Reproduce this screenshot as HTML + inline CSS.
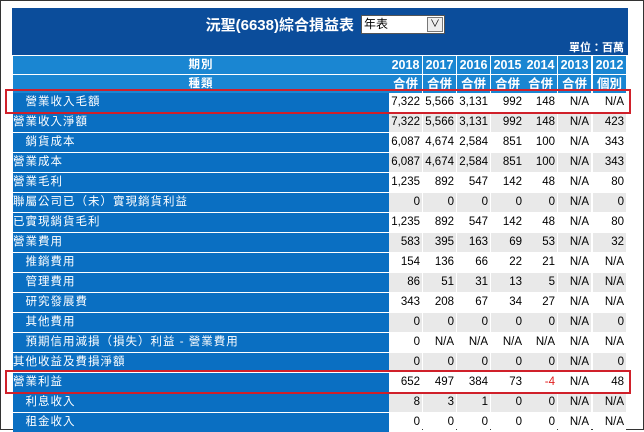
<!DOCTYPE html><html><head><meta charset="utf-8"><style>
*{margin:0;padding:0;box-sizing:border-box}
body{width:644px;height:430px;background:#fff;position:relative;overflow:hidden;font-family:"Liberation Sans","Noto Sans CJK TC",sans-serif;}
.frame{position:absolute;left:0;top:0;width:644px;height:430px;border:1px solid #333;}
.top{position:absolute;left:12px;top:8px;width:616px;height:47px;background:#0b4d9b;color:#fff}
.title{position:absolute;left:170px;width:172px;top:6px;text-align:right;font-size:15px;font-weight:bold;white-space:nowrap}
.sel{position:absolute;left:349px;top:7px;width:84px;height:19px;background:#fff;border:1px solid #555;color:#000;font-size:12px;padding-left:2px;line-height:17px}
.sel i{position:absolute;right:1px;top:1px;width:16px;height:15px;border:1px solid #777;background:#eee;font-style:normal;text-align:center;font-size:10px;line-height:14px}
.unit{position:absolute;right:4px;top:31px;font-size:11px;font-weight:bold}
.row{position:absolute;left:12px;width:616px;height:19px;font-size:11.5px;line-height:19px}
.lab{position:absolute;left:1px;top:0;width:376px;height:19px;background:#0a6fc2;color:#fff;letter-spacing:1px}
.c{position:absolute;top:0;width:33px;height:19px;text-align:right;padding-right:2px;color:#000}
.h .lab{background:#1a86d2;text-align:center;font-weight:bold}
.h .c{background:#1a86d2;color:#fff;font-weight:bold;text-align:center;padding:0;font-size:12.5px}
.red{color:#e02020}
.box{position:absolute;left:5px;width:626px;border:2px solid #d0202a}
</style></head><body>
<div class="frame"></div>
<div class="top"><div class="title">沅聖(6638)綜合損益表</div><div class="sel">年表<i>∨</i></div><div class="unit">單位：百萬</div></div>
<div id="t"></div>
<div class="box" style="top:89px;height:25px"></div>
<div class="box" style="top:370px;height:24px"></div>
<script>
var xs=[377,411,445,479,512,546,581];
var rows=[
["期別",["2018","2017","2016","2015","2014","2013","2012"],1],
["種類",["合併","合併","合併","合併","合併","合併","個別"],1],
["　營業收入毛額",["7,322","5,566","3,131","992","148","N/A","N/A"]],
["營業收入淨額",["7,322","5,566","3,131","992","148","N/A","423"]],
["　銷貨成本",["6,087","4,674","2,584","851","100","N/A","343"]],
["營業成本",["6,087","4,674","2,584","851","100","N/A","343"]],
["營業毛利",["1,235","892","547","142","48","N/A","80"]],
["聯屬公司已（未）實現銷貨利益",["0","0","0","0","0","N/A","0"]],
["已實現銷貨毛利",["1,235","892","547","142","48","N/A","80"]],
["營業費用",["583","395","163","69","53","N/A","32"]],
["　推銷費用",["154","136","66","22","21","N/A","N/A"]],
["　管理費用",["86","51","31","13","5","N/A","N/A"]],
["　研究發展費",["343","208","67","34","27","N/A","N/A"]],
["　其他費用",["0","0","0","0","0","N/A","0"]],
["　預期信用減損（損失）利益 - 營業費用",["0","N/A","N/A","N/A","N/A","N/A","N/A"]],
["其他收益及費損淨額",["0","0","0","0","0","N/A","0"]],
["營業利益",["652","497","384","73","-4","N/A","48"]],
["　利息收入",["8","3","1","0","0","N/A","N/A"]],
["　租金收入",["0","0","0","0","0","N/A","N/A"]]];
var h="";
rows.forEach(function(r,i){
 var top=i<2?56+i*19:93+(i-2)*20;
 var bg=i<2?"":(i%2==0?"#fff":"#e9e9e9");
 h+='<div class="row'+(r[2]?' h':'')+'" style="top:'+top+'px;'+(i<2?'height:18px;line-height:18px':'')+'"><div class="lab"'+(i<2?' style="height:18px"':'')+'>'+r[0]+'</div>';
 r[1].forEach(function(v,j){h+='<div class="c'+(v=="-4"?' red':'')+'" style="left:'+xs[j]+'px;'+(i<2?'height:18px;':'')+(bg?'background:'+bg:'')+'">'+v+'</div>';});
 h+='</div>';
});
document.getElementById("t").innerHTML=h;
</script>
</body></html>
